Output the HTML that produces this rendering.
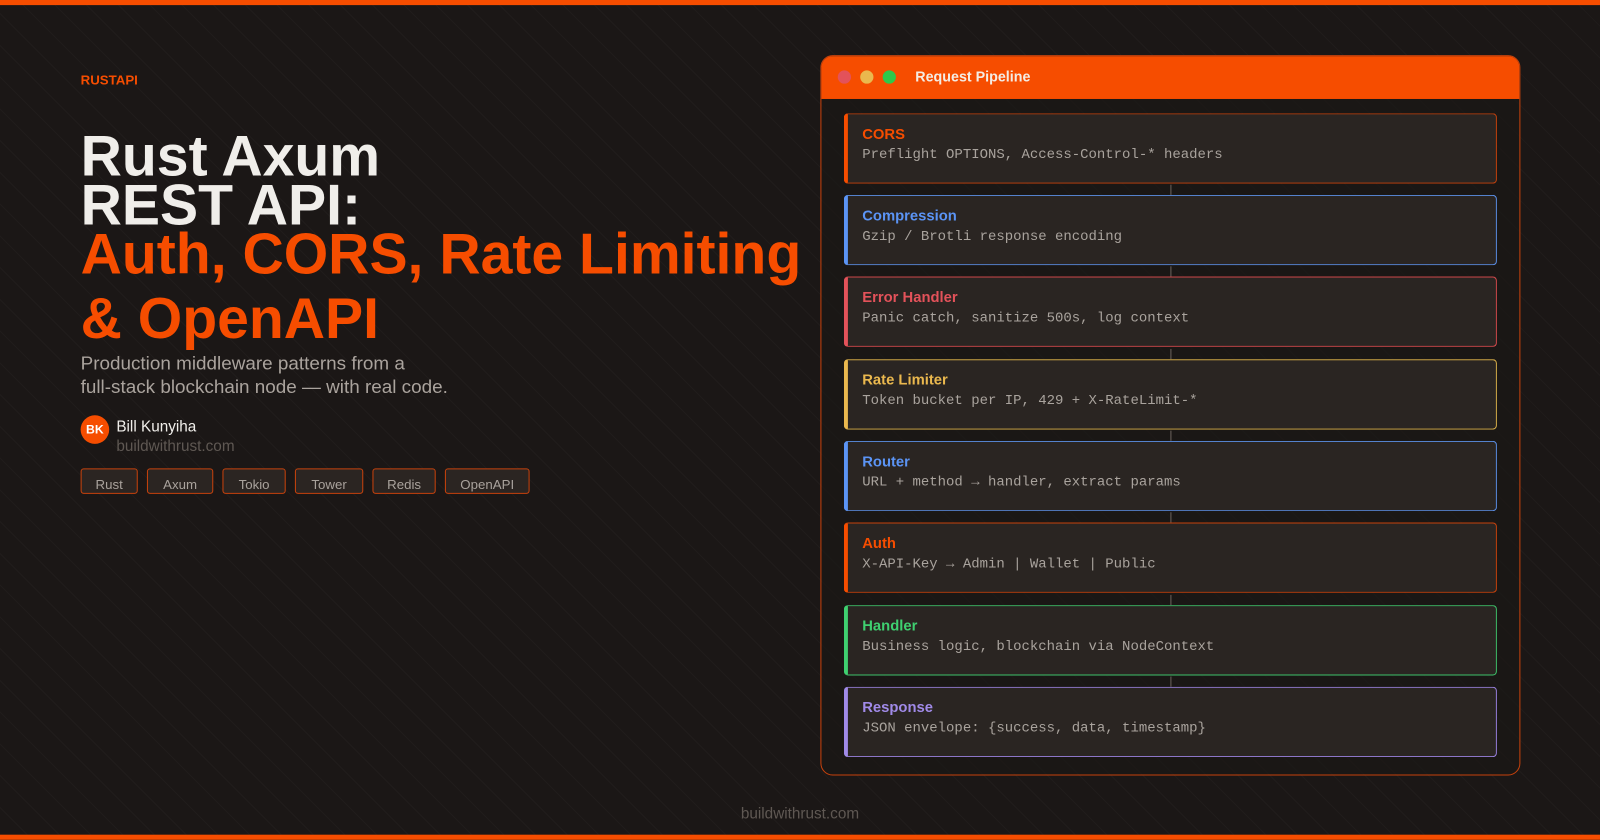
<!DOCTYPE html>
<html><head><meta charset="utf-8"><style>
*{margin:0;padding:0;box-sizing:border-box}
html,body{width:1600px;height:840px;overflow:hidden;background:#1b1716}
#w{position:absolute;left:0;top:0;width:1568px;height:823px;transform:scale(1.0204);transform-origin:0 0;font-family:"Liberation Sans",sans-serif;
background-image:repeating-linear-gradient(45deg,rgba(255,255,255,0.025) 0 1px,transparent 1px 22px);}
.bar{position:absolute;left:0;width:1568px;height:5px;background:#f64d00}
.abs{position:absolute}
h1{position:absolute;left:79px;top:129px;font-size:56px;line-height:48px;font-weight:bold;color:#f0eeea;letter-spacing:0}
.or{color:#f64d00}
.tag{position:absolute;top:459px;height:25px;border:1px solid #c7420c;border-radius:3px;background:#2b2522;color:#a9a29c;font-size:13px;text-align:center;line-height:29px}
.panel{position:absolute;left:804px;top:54px;width:686px;height:706px;border:1px solid #c7420c;border-radius:12px;overflow:hidden;background:rgba(27,23,22,0.6)}
.hdr{height:42px;background:#f64d00;position:relative}
.dot{position:absolute;top:14px;width:13px;height:13px;border-radius:50%}
.card{position:absolute;left:22px;width:640px;height:69px;background:#2a2522;border:1px solid;border-left-width:4px;border-radius:4px}
.card b{position:absolute;left:14px;top:12px;font-size:14.5px}
.card span{position:absolute;left:14px;top:33px;font-family:"Liberation Mono","DejaVu Sans Mono",monospace;font-size:13.7px;color:#a9a39d}
.arr{position:absolute;left:342px;width:1px;height:10px;background:#6b625c}
</style></head><body><div id="w">
<div class="bar" style="top:0"></div>
<div class="bar" style="top:818px"></div>
<div class="abs" style="left:79px;top:71px;font-size:13px;font-weight:bold;color:#f64d00">RUSTAPI</div>
<h1>Rust Axum<br>REST API:<br><span class="or">Auth, CORS, Rate Limiting</span><br><span class="or" style="display:inline-block;margin-top:15px">&amp; OpenAPI</span></h1>
<div class="abs" style="left:79px;top:344px;font-size:18.5px;line-height:23px;color:#aaa39d">Production middleware patterns from a<br>full-stack blockchain node — with real code.</div>
<div class="abs" style="left:79px;top:407px;width:28px;height:28px;border-radius:50%;background:#f64d00;color:#fff;font-size:12px;font-weight:bold;text-align:center;line-height:28px">BK</div>
<div class="abs" style="left:114px;top:410px;font-size:15px;color:#f0eeea">Bill Kunyiha</div>
<div class="abs" style="left:114px;top:429px;font-size:15px;color:#5f5853">buildwithrust.com</div>
<div class="tag" style="left:79px;width:56px">Rust</div>
<div class="tag" style="left:144px;width:65px">Axum</div>
<div class="tag" style="left:218px;width:62px">Tokio</div>
<div class="tag" style="left:289px;width:67px">Tower</div>
<div class="tag" style="left:365px;width:62px">Redis</div>
<div class="tag" style="left:436px;width:83px">OpenAPI</div>
<div class="panel">
 <div class="hdr">
  <div class="dot" style="left:16px;background:#e3525a"></div>
  <div class="dot" style="left:38px;background:#eab84e"></div>
  <div class="dot" style="left:60px;background:#2ec94a"></div>
  <div class="abs" style="left:92px;top:12px;font-size:14px;font-weight:bold;color:#f4ece4">Request Pipeline</div>
 </div>
 <div class="card" style="top:56px;border-color:#c7420c;border-left-color:#f64d00"><b style="color:#f64d00">CORS</b><span>Preflight OPTIONS, Access-Control-* headers</span></div>
 <div class="arr" style="top:126px"></div>
 <div class="card" style="top:136px;border-color:#5b8fe6;border-left-color:#5b94f5"><b style="color:#5b94f5">Compression</b><span>Gzip / Brotli response encoding</span></div>
 <div class="arr" style="top:206px"></div>
 <div class="card" style="top:216px;border-color:#d2494c;border-left-color:#e3525a"><b style="color:#e3525a">Error Handler</b><span>Panic catch, sanitize 500s, log context</span></div>
 <div class="arr" style="top:287px"></div>
 <div class="card" style="top:297px;border-color:#dbb14a;border-left-color:#eab84e"><b style="color:#eab84e">Rate Limiter</b><span>Token bucket per IP, 429 + X-RateLimit-*</span></div>
 <div class="arr" style="top:367px"></div>
 <div class="card" style="top:377px;border-color:#5b8fe6;border-left-color:#5b94f5"><b style="color:#5b94f5">Router</b><span>URL + method → handler, extract params</span></div>
 <div class="arr" style="top:447px"></div>
 <div class="card" style="top:457px;border-color:#c7420c;border-left-color:#f64d00"><b style="color:#f64d00">Auth</b><span>X-API-Key → Admin | Wallet | Public</span></div>
 <div class="arr" style="top:528px"></div>
 <div class="card" style="top:538px;border-color:#3ec26a;border-left-color:#3fd070"><b style="color:#3fd070">Handler</b><span>Business logic, blockchain via NodeContext</span></div>
 <div class="arr" style="top:608px"></div>
 <div class="card" style="top:618px;border-color:#9a82e0;border-left-color:#a08ae8"><b style="color:#a08ae8">Response</b><span>JSON envelope: {success, data, timestamp}</span></div>
</div>
<div class="abs" style="left:0;width:1568px;text-align:center;top:789px;font-size:15px;color:#5f5853">buildwithrust.com</div>
</div></body></html>
